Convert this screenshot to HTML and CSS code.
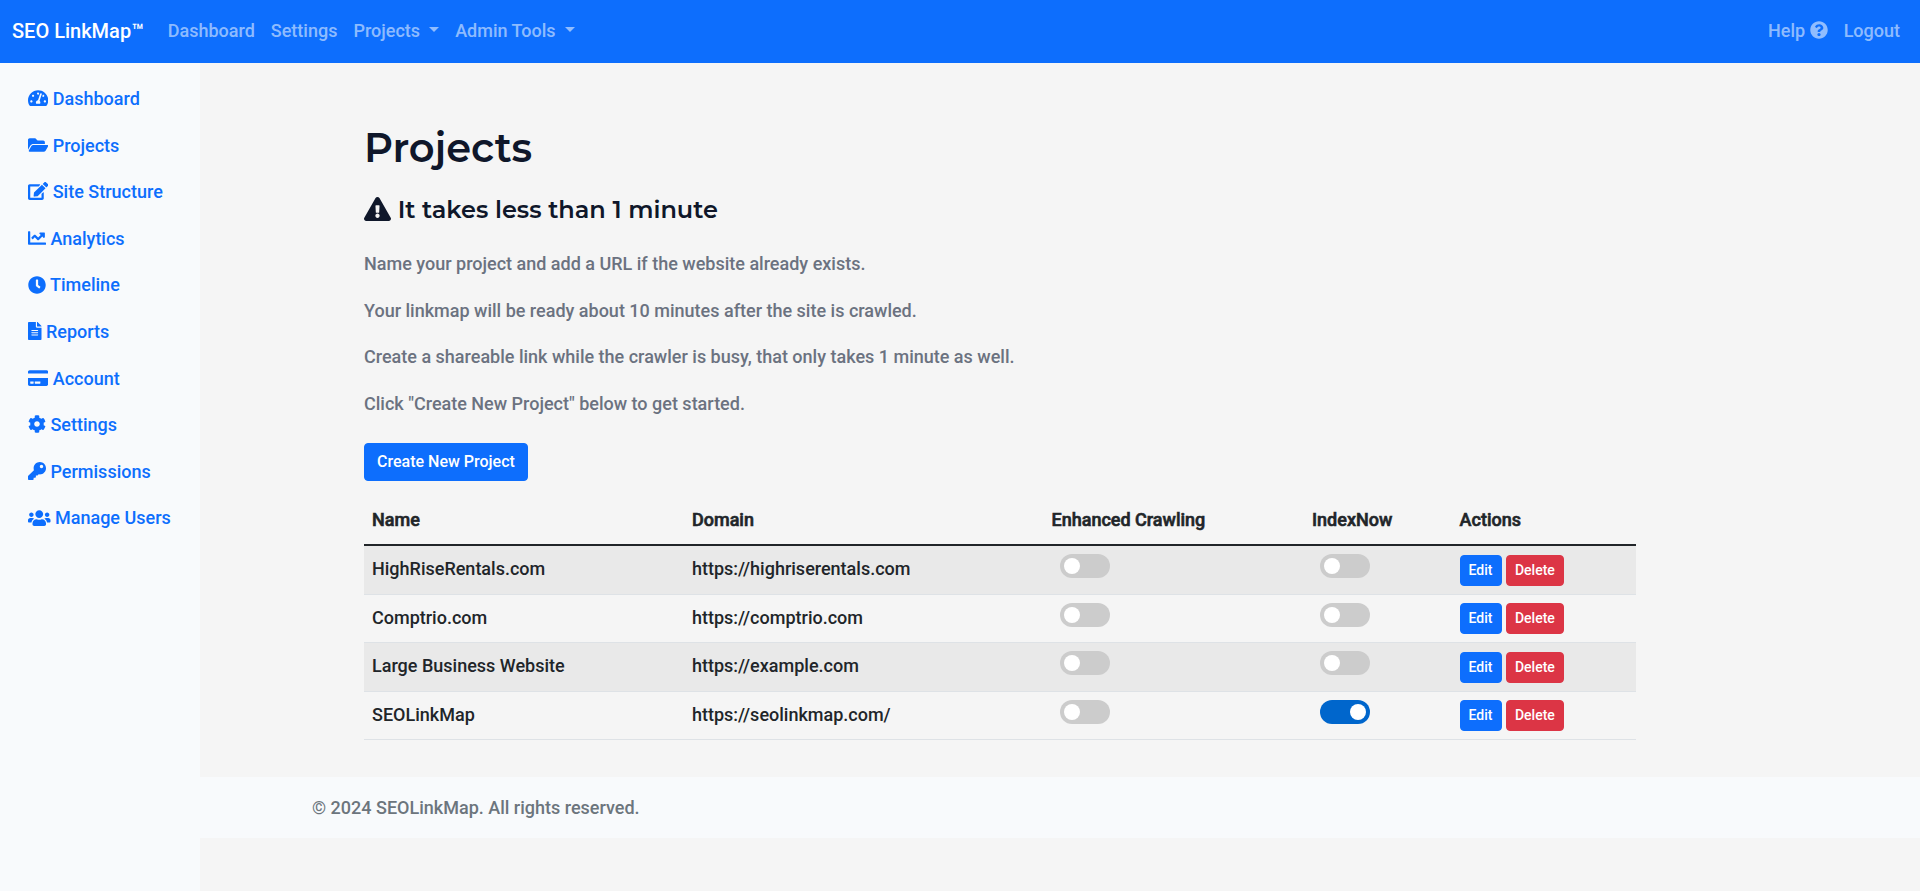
FILE: index.html
```html
<!DOCTYPE html>
<html lang="en">
<head>
  <meta charset="UTF-8">
  <title>Projects - SEO LinkMap</title>
  <link rel="stylesheet" href="styles.css">
</head>
<body>

  <nav class="navbar">
    <a class="navbar-brand" href="#">SEO LinkMap™</a>
    <a class="nav-link" href="#">Dashboard</a>
    <a class="nav-link" href="#">Settings</a>
    <a class="nav-link dropdown-toggle" href="#">Projects </a>
    <a class="nav-link dropdown-toggle" href="#">Admin Tools </a>
    <div class="navbar-right">
      <a class="nav-link" href="#">Help <svg class="icon" viewBox="0 0 512 512"><path d="M504 256c0 136.997-111.043 248-248 248S8 392.997 8 256C8 119.083 119.043 8 256 8s248 111.083 248 248zM262.655 90c-54.497 0-89.255 22.957-116.549 63.758-3.536 5.286-2.353 12.415 2.715 16.258l34.699 26.31c5.205 3.947 12.621 3.008 16.665-2.122 17.864-22.658 30.113-35.797 57.303-35.797 20.429 0 45.698 13.148 45.698 32.958 0 14.976-12.363 22.667-32.534 33.976C247.128 238.528 216 254.941 216 296v4c0 6.627 5.373 12 12 12h56c6.627 0 12-5.373 12-12v-1.333c0-28.462 83.186-29.647 83.186-106.667 0-58.002-60.165-102-116.531-102zM256 338c-25.365 0-46 20.635-46 46 0 25.364 20.635 46 46 46s46-20.636 46-46c0-25.365-20.635-46-46-46z"/></svg></a>
      <a class="nav-link" href="#">Logout</a>
    </div>
  </nav>

  <div class="layout">
    <aside class="sidebar">
      <a href="#"><svg class="icon icon-wide" viewBox="0 0 576 512"><path d="M288 32C128.94 32 0 160.94 0 320c0 52.8 14.25 102.26 39.06 144.8 5.61 9.62 16.3 15.2 27.44 15.2h443c11.14 0 21.83-5.58 27.44-15.2C561.75 422.26 576 372.8 576 320c0-159.06-128.94-288-288-288zm0 64c14.71 0 26.58 10.13 30.32 23.65-1.11 2.26-2.64 4.23-3.45 6.67l-9.22 27.67c-5.13 3.49-10.97 6.01-17.64 6.01-17.67 0-32-14.33-32-32S270.33 96 288 96zM96 384c-17.67 0-32-14.33-32-32s14.33-32 32-32 32 14.33 32 32-14.33 32-32 32zm48-160c-17.67 0-32-14.33-32-32s14.33-32 32-32 32 14.33 32 32-14.33 32-32 32zm246.77-72.41l-61.33 184C343.13 347.33 352 364.54 352 384c0 11.72-3.38 22.55-8.88 32H232.88c-5.5-9.45-8.88-20.28-8.88-32 0-33.94 26.5-61.43 59.9-63.59l61.34-184.01c4.17-12.56 17.73-19.45 30.36-15.17 12.57 4.19 19.35 17.79 15.17 30.36zm14.66 57.2l15.52-46.55c3.47-1.29 7.13-2.23 11.05-2.23 17.67 0 32 14.33 32 32s-14.33 32-32 32c-11.38-.01-20.89-6.28-26.57-15.22zM480 384c-17.67 0-32-14.33-32-32s14.33-32 32-32 32 14.33 32 32-14.33 32-32 32z"/></svg> Dashboard</a>
      <a href="#"><svg class="icon icon-wide" viewBox="0 0 576 512"><path d="M572.694 292.093L500.27 416.248A63.997 63.997 0 0 1 444.989 448H45.025c-18.523 0-30.064-20.093-20.731-36.093l72.424-124.155A64 64 0 0 1 152 256h399.964c18.523 0 30.064 20.093 20.73 36.093zM152 224h328v-48c0-26.51-21.49-48-48-48H272l-64-64H48C21.49 64 0 85.49 0 112v278.046l69.077-118.418C86.214 242.25 117.989 224 152 224z"/></svg> Projects</a>
      <a href="#"><svg class="icon icon-wide" viewBox="0 0 576 512"><path d="M402.6 83.2l90.2 90.2c3.8 3.8 3.8 10 0 13.8L274.4 405.6l-92.8 10.3c-12.4 1.4-22.9-9.1-21.5-21.5l10.3-92.8L388.8 83.2c3.8-3.8 10-3.8 13.8 0zm162-22.9l-48.8-48.8c-15.2-15.2-39.9-15.2-55.2 0l-35.4 35.4c-3.8 3.8-3.8 10 0 13.8l90.2 90.2c3.8 3.8 10 3.8 13.8 0l35.4-35.4c15.2-15.3 15.2-40 0-55.2zM384 346.2V448H64V128h229.8c3.2 0 6.2-1.3 8.5-3.5l40-40c7.6-7.6 2.2-20.5-8.5-20.5H48C21.5 64 0 85.5 0 112v352c0 26.5 21.5 48 48 48h352c26.5 0 48-21.5 48-48V306.2c0-10.7-12.9-16-20.5-8.5l-40 40c-2.2 2.3-3.5 5.3-3.5 8.5z"/></svg> Site Structure</a>
      <a href="#"><svg class="icon" viewBox="0 0 512 512"><path d="M496 384H64V80c0-8.84-7.16-16-16-16H16C7.16 64 0 71.16 0 80v336c0 17.67 14.33 32 32 32h464c8.84 0 16-7.16 16-16v-32c0-8.84-7.16-16-16-16zM464 96H345.94c-21.38 0-32.09 25.85-16.97 40.97l32.4 32.4L288 242.75l-73.37-73.37c-12.5-12.5-32.76-12.5-45.25 0l-68.69 68.69c-6.25 6.25-6.25 16.38 0 22.63l22.62 22.62c6.25 6.25 16.38 6.25 22.63 0L192 237.25l73.37 73.37c12.5 12.5 32.76 12.5 45.25 0l96-96 32.4 32.4c15.12 15.12 40.97 4.41 40.97-16.97V112c.01-8.84-7.15-16-15.99-16z"/></svg> Analytics</a>
      <a href="#"><svg class="icon" viewBox="0 0 512 512"><path d="M256,8C119,8,8,119,8,256S119,504,256,504,504,393,504,256,393,8,256,8Zm92.49,313h0l-20,25a16,16,0,0,1-22.49,2.5h0l-67-49.72a40,40,0,0,1-15-31.23V112a16,16,0,0,1,16-16h32a16,16,0,0,1,16,16V256l58,42.5A16,16,0,0,1,348.49,321Z"/></svg> Timeline</a>
      <a href="#"><svg class="icon icon-narrow" viewBox="0 0 384 512"><path d="M224 136V0H24C10.7 0 0 10.7 0 24v464c0 13.3 10.7 24 24 24h336c13.3 0 24-10.7 24-24V160H248c-13.2 0-24-10.8-24-24zm64 236c0 6.6-5.4 12-12 12H108c-6.6 0-12-5.4-12-12v-8c0-6.6 5.4-12 12-12h168c6.6 0 12 5.4 12 12v8zm0-64c0 6.6-5.4 12-12 12H108c-6.6 0-12-5.4-12-12v-8c0-6.6 5.4-12 12-12h168c6.6 0 12 5.4 12 12v8zm0-72v8c0 6.6-5.4 12-12 12H108c-6.6 0-12-5.4-12-12v-8c0-6.6 5.4-12 12-12h168c6.6 0 12 5.4 12 12zm96-114.1v6.1H256V0h6.1c6.4 0 12.5 2.5 17 7l97.9 98c4.5 4.5 7 10.6 7 16.9z"/></svg> Reports</a>
      <a href="#"><svg class="icon icon-wide" viewBox="0 0 576 512"><path d="M0 432c0 26.5 21.5 48 48 48h480c26.5 0 48-21.5 48-48V256H0v176zm192-68c0-6.6 5.4-12 12-12h136c6.6 0 12 5.4 12 12v40c0 6.6-5.4 12-12 12H204c-6.6 0-12-5.4-12-12v-40zm-128 0c0-6.6 5.4-12 12-12h72c6.6 0 12 5.4 12 12v40c0 6.6-5.4 12-12 12H76c-6.6 0-12-5.4-12-12v-40zM576 80v48H0V80c0-26.5 21.5-48 48-48h480c26.5 0 48 21.5 48 48z"/></svg> Account</a>
      <a href="#"><svg class="icon" viewBox="0 0 512 512"><path d="M487.4 315.7l-42.6-24.6c4.3-23.2 4.3-47 0-70.2l42.6-24.6c4.9-2.8 7.1-8.6 5.5-14-11.1-35.6-30-67.8-54.7-94.6-3.8-4.1-10-5.1-14.8-2.3L380.8 110c-17.9-15.4-38.5-27.3-60.8-35.1V25.8c0-5.6-3.9-10.5-9.4-11.7-36.7-8.2-74.3-7.8-109.2 0-5.5 1.2-9.4 6.1-9.4 11.7V75c-22.2 7.9-42.8 19.8-60.8 35.1L88.7 85.5c-4.9-2.8-11-1.9-14.8 2.3-24.7 26.7-43.6 58.9-54.7 94.6-1.7 5.4.6 11.2 5.5 14L67.3 221c-4.3 23.2-4.3 47 0 70.2l-42.6 24.6c-4.9 2.8-7.1 8.6-5.5 14 11.1 35.6 30 67.8 54.7 94.6 3.8 4.1 10 5.1 14.8 2.3l42.6-24.6c17.9 15.4 38.5 27.3 60.8 35.1v49.2c0 5.6 3.9 10.5 9.4 11.7 36.7 8.2 74.3 7.8 109.2 0 5.5-1.2 9.4-6.1 9.4-11.7v-49.2c22.2-7.9 42.8-19.8 60.8-35.1l42.6 24.6c4.9 2.8 11 1.9 14.8-2.3 24.7-26.7 43.6-58.9 54.7-94.6 1.5-5.5-.7-11.3-5.6-14.1zM256 336c-44.1 0-80-35.9-80-80s35.9-80 80-80 80 35.9 80 80-35.9 80-80 80z"/></svg> Settings</a>
      <a href="#"><svg class="icon" viewBox="0 0 512 512"><path d="M512 176.001C512 273.203 433.202 352 336 352c-11.22 0-22.19-1.062-32.827-3.069l-24.012 27.014A23.999 23.999 0 0 1 261.223 384H224v40c0 13.255-10.745 24-24 24h-40v40c0 13.255-10.745 24-24 24H24c-13.255 0-24-10.745-24-24v-78.059c0-6.365 2.529-12.47 7.029-16.971l161.802-161.802C163.108 213.814 160 195.271 160 176 160 78.798 238.797.001 335.999 0 433.488-.001 512 78.511 512 176.001zM336 128c0 26.51 21.49 48 48 48s48-21.49 48-48-21.49-48-48-48-48 21.49-48 48z"/></svg> Permissions</a>
      <a href="#"><svg class="icon icon-users" viewBox="0 0 640 512"><path d="M96 224c35.3 0 64-28.7 64-64s-28.7-64-64-64-64 28.7-64 64 28.7 64 64 64zm448 0c35.3 0 64-28.7 64-64s-28.7-64-64-64-64 28.7-64 64 28.7 64 64 64zm32 32h-64c-17.6 0-33.5 7.1-45.1 18.6 40.3 22.1 68.9 62 75.1 109.4h66c17.7 0 32-14.3 32-32v-32c0-35.3-28.7-64-64-64zm-256 0c61.9 0 112-50.1 112-112S381.9 32 320 32 208 82.1 208 144s50.1 112 112 112zm76.8 32h-8.3c-20.8 10-43.9 16-68.5 16s-47.6-6-68.5-16h-8.3C179.6 288 128 339.6 128 403.2V432c0 26.5 21.5 48 48 48h288c26.5 0 48-21.5 48-48v-28.8c0-63.6-51.6-115.2-115.2-115.2zm-223.7-13.4C161.5 263.1 145.6 256 128 256H64c-35.3 0-64 28.7-64 64v32c0 17.7 14.3 32 32 32h65.9c6.3-47.4 34.9-87.3 75.2-109.4z"/></svg> Manage Users</a>
    </aside>

    <div class="page">
      <main class="content">
        <h1>Projects</h1>
        <h2><svg class="icon icon-wide" viewBox="0 0 576 512"><path d="M569.517 440.013C587.975 472.007 564.806 512 527.94 512H48.054c-36.937 0-59.999-40.055-41.577-71.987L246.423 23.985c18.467-32.009 64.72-31.951 83.154 0l239.94 416.028zM288 354c-25.405 0-46 20.595-46 46s20.595 46 46 46 46-20.595 46-46-20.595-46-46-46zm-43.673-165.346l7.418 136c.347 6.364 5.609 11.346 11.982 11.346h48.546c6.373 0 11.635-4.982 11.982-11.346l7.418-136c.375-6.874-5.098-12.654-11.982-12.654h-63.383c-6.884 0-12.356 5.78-11.981 12.654z"/></svg> <span>It takes less than 1 minute</span></h2>
        <p>Name your project and add a URL if the website already exists.</p>
        <p>Your linkmap will be ready about 10 minutes after the site is crawled.</p>
        <p>Create a shareable link while the crawler is busy, that only takes 1 minute as well.</p>
        <p>Click "Create New Project" below to get started.</p>
        <button class="btn btn-create">Create New Project</button>

        <table class="table">
          <colgroup>
            <col class="col-name">
            <col class="col-domain">
            <col class="col-crawl">
            <col class="col-index">
            <col class="col-actions">
          </colgroup>
          <thead>
            <tr>
              <th>Name</th>
              <th>Domain</th>
              <th>Enhanced Crawling</th>
              <th>IndexNow</th>
              <th>Actions</th>
            </tr>
          </thead>
          <tbody>
            <tr>
              <td>HighRiseRentals.com</td>
              <td>https://highriserentals.com</td>
              <td><div class="switch"></div></td>
              <td><div class="switch"></div></td>
              <td class="actions"><button class="btn btn-sm">Edit</button> <button class="btn btn-sm btn-danger">Delete</button></td>
            </tr>
            <tr>
              <td>Comptrio.com</td>
              <td>https://comptrio.com</td>
              <td><div class="switch"></div></td>
              <td><div class="switch"></div></td>
              <td class="actions"><button class="btn btn-sm">Edit</button> <button class="btn btn-sm btn-danger">Delete</button></td>
            </tr>
            <tr>
              <td>Large Business Website</td>
              <td>https://example.com</td>
              <td><div class="switch"></div></td>
              <td><div class="switch"></div></td>
              <td class="actions"><button class="btn btn-sm">Edit</button> <button class="btn btn-sm btn-danger">Delete</button></td>
            </tr>
            <tr>
              <td>SEOLinkMap</td>
              <td>https://seolinkmap.com/</td>
              <td><div class="switch"></div></td>
              <td><div class="switch on"></div></td>
              <td class="actions"><button class="btn btn-sm">Edit</button> <button class="btn btn-sm btn-danger">Delete</button></td>
            </tr>
          </tbody>
        </table>
      </main>

      <footer class="footer">© 2024 SEOLinkMap. All rights reserved.</footer>
    </div>
  </div>

</body>
</html>
```

FILE: styles.css
```css
:root {
  --primary: #0d6efd;
  --danger: #dc3545;
  --light: #f8fafc;
  --muted: #6c757d;
  --heading: #0f172a;
}

* {
  box-sizing: border-box;
}

body {
  margin: 0;
  min-height: 100vh;
  display: flex;
  flex-direction: column;
  font-family: Roboto, sans-serif;
  font-size: 18px;
  font-weight: 500;
  line-height: 1.7;
  color: #212529;
  background: #f5f5f5;
}

a {
  color: var(--primary);
  text-decoration: none;
}

.icon {
  width: 1em;
  height: 1em;
  vertical-align: -0.125em;
  fill: currentColor;
}

.icon-wide {
  width: 1.125em;
}

.icon-narrow {
  width: 0.75em;
}

.icon-users {
  width: 1.25em;
}

/* top bar */
.navbar {
  display: flex;
  align-items: center;
  padding: 8px 12px;
  background: var(--primary);
}

.navbar-brand {
  margin-right: 16px;
  font-size: 20px;
  line-height: 30px;
  color: #fff;
}

.nav-link {
  padding: 8px;
  color: rgba(255, 255, 255, 0.55);
}

.dropdown-toggle {
  white-space: pre;
}

.dropdown-toggle::after {
  content: "";
  display: inline-block;
  margin-left: 0.255em;
  vertical-align: 0.255em;
  border-top: 0.3em solid;
  border-right: 0.3em solid transparent;
  border-left: 0.3em solid transparent;
}

.navbar-right {
  display: flex;
  margin-left: auto;
}

.layout {
  flex: 1;
  display: flex;
}

.sidebar {
  width: 200px;
  padding: 13.4px 12px;
  background: var(--light);
}

.sidebar a {
  display: block;
  padding: 8px 16px;
  white-space: nowrap;
}

.page {
  flex: 1;
}

.content {
  width: 1272px;
  margin-left: 164px;
  padding: 61px 0 36.5px;
}

h1, h2 {
  margin: 0;
  font-family: Montserrat, Inter, sans-serif;
  font-weight: 600;
  line-height: 1.2;
  color: var(--heading);
}

h1 {
  margin-bottom: 24px;
  font-size: 40px;
}

h2 {
  margin-bottom: 24.6px;
  font-size: 24px;
}

p {
  margin: 0 0 16px;
  color: #6b7280;
}

.btn {
  padding: 6px 12px;
  border: 1px solid var(--primary);
  border-radius: 4px;
  font: 500 16px/24px Roboto, sans-serif;
  color: #fff;
  background: var(--primary);
  cursor: pointer;
}

.btn-create {
  display: block;
  margin: 24px 0 16px;
}

.btn-sm {
  padding: 4px 8px;
  font-size: 14px;
  line-height: 21px;
}

.btn-danger {
  border-color: var(--danger);
  background: var(--danger);
}

/* projects table */
.table {
  width: 100%;
  table-layout: fixed;
  border-collapse: separate;
  border-spacing: 0;
}

.col-name { width: 320px; }
.col-domain { width: 359.5px; }
.col-crawl { width: 260.5px; }
.col-index { width: 147.6px; }

.table th,
.table td {
  height: 48.6px;
  padding: 8px;
  text-align: left;
  vertical-align: top;
  border-bottom: 1px solid #dee2e6;
}

.table th {
  font-weight: 500;
  -webkit-text-stroke: 0.6px;
  border-bottom: 2px solid #212529;
}

.table .actions {
  padding: 8.75px 8px 0;
  line-height: 1;
}

.table tbody tr:nth-child(odd) {
  background: #e9e9e9;
}

.switch {
  width: 50px;
  height: 24px;
  margin-left: 8px;
  padding: 4px;
  border-radius: 12px;
  background: #ccc;
}

.switch::before {
  content: "";
  display: block;
  width: 16px;
  height: 16px;
  border-radius: 50%;
  background: #fff;
}

.switch.on {
  background: #0066cc;
}

.switch.on::before {
  margin-left: 26px;
}

.footer {
  padding: 16px 112px 15px;
  color: var(--muted);
  background: var(--light);
}
```
